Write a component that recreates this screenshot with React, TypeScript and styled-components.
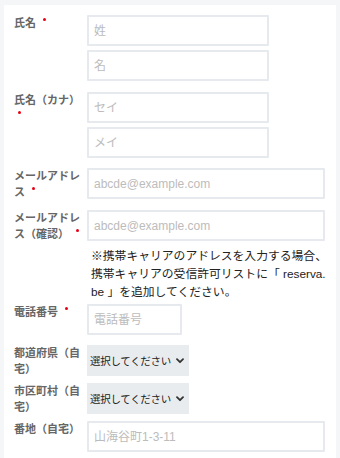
import React from "react";
import styled, { createGlobalStyle } from "styled-components";

const Global = createGlobalStyle`
  html, body { margin: 0; padding: 0; background: #f5f6f8; }
  body { font-family: "Liberation Sans", "Noto Sans CJK JP", sans-serif; }
  * { box-sizing: border-box; }
`;

const Page = styled.div`
  padding: 5px 4px 0 4px;
  min-height: 458px;
`;

const Card = styled.form`
  background: #ffffff;
  padding: 10px 11px 12px 10px;
  display: flex;
  flex-direction: column;
  min-height: 460px;
`;

const Row = styled.div<{ $mb: number; $mt?: number }>`
  display: flex;
  align-items: flex-start;
  margin-top: ${(p) => p.$mt ?? 0}px;
  margin-bottom: ${(p) => p.$mb}px;
`;

const Label = styled.div`
  width: 73px;
  flex: none;
  padding-right: 3px;
  font-size: 11px;
  line-height: 16px;
  font-weight: bold;
  color: #666;
`;

const Required = styled.span`
  display: inline-block;
  width: 3px;
  height: 3px;
  border-radius: 50%;
  background: #e60012;
  margin-left: 4px;
  vertical-align: 6px;
`;

const Fields = styled.div`
  flex: 1;
  display: flex;
  flex-direction: column;
  gap: 4px;
  min-width: 0;
`;

const Input = styled.input<{ $w?: number }>`
  width: ${(p) => (p.$w ? `${p.$w}px` : "100%")};
  height: 31px;
  border: 2px solid #e6eaee;
  border-radius: 1px;
  padding: 0 5px;
  font-family: inherit;
  font-size: 12px;
  color: #333;
  background: #fff;
  outline: none;
  &::placeholder { color: #bcbcbc; }
`;

const Note = styled.p`
  margin: 5px 0 0 77px;
  font-size: 11.8px;
  line-height: 18px;
  color: #222;
  white-space: nowrap;
`;

const SelectBox = styled.button`
  width: 102px;
  height: 31px;
  border: none;
  background: #e9ecee;
  display: flex;
  align-items: center;
  justify-content: space-between;
  padding: 0 5px 0 3px;
  font-family: inherit;
  font-size: 10.5px;
  letter-spacing: -0.3px;
  color: #222;
  cursor: pointer;
`;

const Chevron = () => (
  <svg width="8" height="6" viewBox="0 0 8 6" aria-hidden="true">
    <path d="M1 1.2 L4 4.2 L7 1.2" fill="none" stroke="#333" strokeWidth="1.8" strokeLinecap="round" strokeLinejoin="round" />
  </svg>
);

const Select = ({ label }: { label: string }) => (
  <SelectBox type="button">
    <span>{label}</span>
    <Chevron />
  </SelectBox>
);

export default function App() {
  return (
    <>
      <Global />
      <Page>
        <Card>
          <Row $mb={11}>
            <Label>
              氏名 <Required />
            </Label>
            <Fields>
              <Input $w={182} placeholder="姓" />
              <Input $w={182} placeholder="名" />
            </Fields>
          </Row>
          <Row $mb={10}>
            <Label>
              氏名（カナ） <Required />
            </Label>
            <Fields>
              <Input $w={182} placeholder="セイ" />
              <Input $w={182} placeholder="メイ" />
            </Fields>
          </Row>
          <Row $mb={10}>
            <Label>
              メールアドレス <Required />
            </Label>
            <Fields>
              <Input placeholder="abcde@example.com" />
            </Fields>
          </Row>
          <Row $mb={0}>
            <Label>
              メールアドレス（確認） <Required />
            </Label>
            <Fields>
              <Input placeholder="abcde@example.com" />
            </Fields>
          </Row>
          <Note>
            ※携帯キャリアのアドレスを入力する場合、
            <br />
            携帯キャリアの受信許可リストに「 reserva.
            <br />
            be 」を追加してください。
          </Note>
          <Row $mb={10} $mt={3}>
            <Label>
              電話番号 <Required />
            </Label>
            <Fields>
              <Input $w={95} placeholder="電話番号" />
            </Fields>
          </Row>
          <Row $mb={6}>
            <Label>都道府県（自宅）</Label>
            <Fields>
              <Select label="選択してください" />
            </Fields>
          </Row>
          <Row $mb={6}>
            <Label>市区町村（自宅）</Label>
            <Fields>
              <Select label="選択してください" />
            </Fields>
          </Row>
          <Row $mb={6}>
            <Label>番地（自宅）</Label>
            <Fields>
              <Input placeholder="山海谷町1-3-11" />
            </Fields>
          </Row>
        </Card>
      </Page>
    </>
  );
}
